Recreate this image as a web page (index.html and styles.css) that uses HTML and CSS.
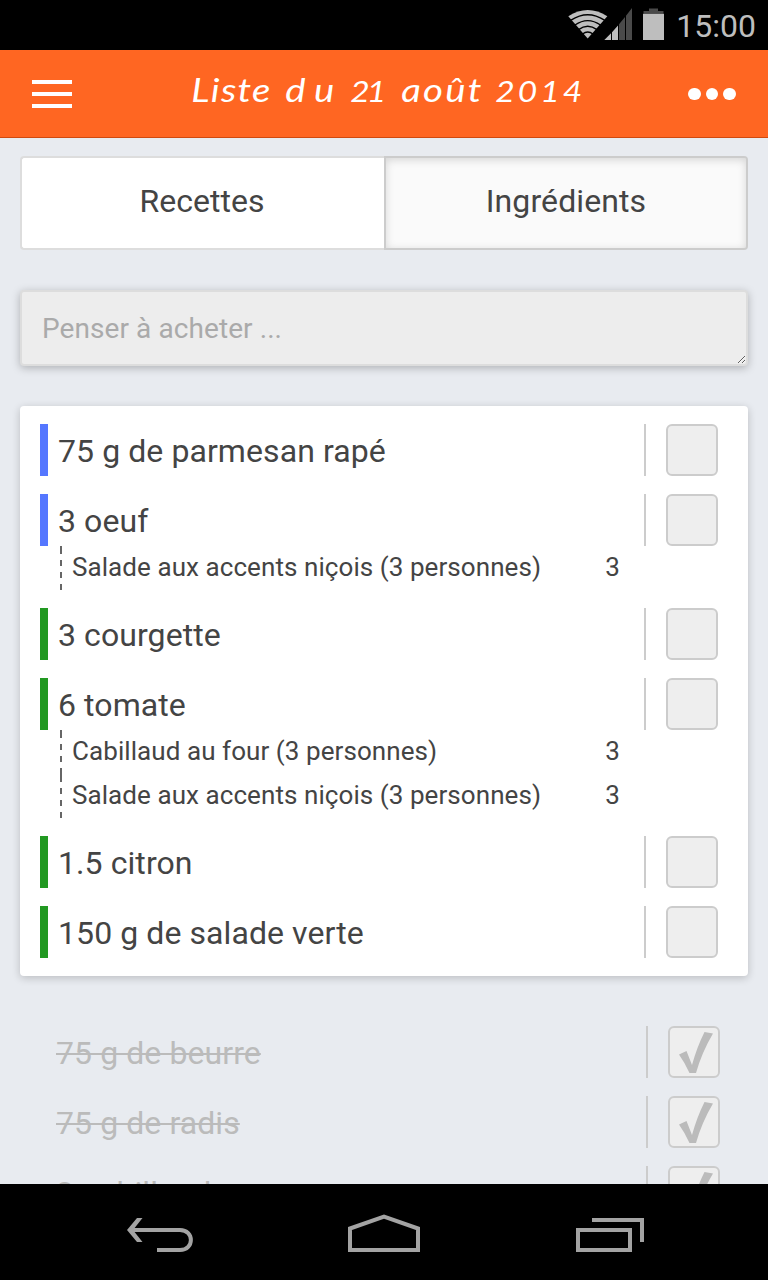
FILE: index.html
```html
<!DOCTYPE html>
<html lang="fr">
<head>
<meta charset="utf-8">
<title>Liste du 21 août 2014</title>
<link rel="stylesheet" href="styles.css">
</head>
<body>
<div class="status">
  <svg class="status-icons" width="100" height="34" viewBox="566 6 100 34">
    <path d="M587.700 38.500 L568.300 16.300 Q587.700 3.500 607.300 16.300Z" fill="#bebebe"/>
    <g fill="none" stroke="#000" stroke-width="1.400">
      <path d="M571 20.200 Q587.700 9.200 604.500 20.200"/>
      <path d="M575 25 Q587.700 16.200 600.500 25"/>
      <path d="M578.500 29.600 Q587.700 22.800 597 29.600"/>
      <path d="M582.500 34 Q587.700 30 593 34"/>
    </g>
    <path d="M604.300 40 L611 33.300 V40Z M612 32.300 L618 25.500 V40 H612Z" fill="#bebebe"/>
    <path d="M619 24.300 L625 17 V40 H619Z M626 15.800 L632 8 V40 H626Z" fill="#4a4a4a"/>
    <path d="M643.500 13.800 V11 H649 V8.500 H658 V11 H663.500 V13.800Z" fill="#4a4a4a"/>
    <path d="M643 13.800 H664 V40 H643Z" fill="#bebebe"/>
  </svg>
  <span class="clock">15:00</span>
</div>
<header class="header">
  <div class="menu"><i></i><i></i><i></i></div>
  <h1 class="title"><span class="w1">Liste</span><span class="w2">du</span><span class="w3">21</span><span class="w4">août</span><span class="w5">2014</span></h1>
  <div class="more"><i></i><i></i><i></i></div>
</header>
<main class="content">
  <div class="tabs">
    <div class="tab">Recettes</div>
    <div class="tab active">Ingrédients</div>
  </div>
  <textarea class="think" placeholder="Penser à acheter ..."></textarea>
  <section class="card">
    <div class="item">
      <div class="row blue"><span class="name">75 g de parmesan rapé</span><span class="check"><i class="box"></i></span></div>
    </div>
    <div class="item">
      <div class="row blue"><span class="name">3 oeuf</span><span class="check"><i class="box"></i></span></div>
      <div class="sub"><span>Salade aux accents niçois (3 personnes)</span><span>3</span></div>
    </div>
    <div class="item">
      <div class="row green"><span class="name">3 courgette</span><span class="check"><i class="box"></i></span></div>
    </div>
    <div class="item">
      <div class="row green"><span class="name">6 tomate</span><span class="check"><i class="box"></i></span></div>
      <div class="sub"><span>Cabillaud au four (3 personnes)</span><span>3</span></div>
      <div class="sub"><span>Salade aux accents niçois (3 personnes)</span><span>3</span></div>
    </div>
    <div class="item">
      <div class="row green"><span class="name">1.5 citron</span><span class="check"><i class="box"></i></span></div>
    </div>
    <div class="item">
      <div class="row green"><span class="name">150 g de salade verte</span><span class="check"><i class="box"></i></span></div>
    </div>
  </section>
  <section class="done">
    <div class="row"><span class="name">75 g de beurre</span><span class="check"><i class="box"><svg viewBox="0 0 48 48"><path d="M9 26.500 L16.500 23 L22 37 Q27 19 34.500 4 L43 5.500 Q32 24 26 45 H19.500 Q15 35 9 26.500Z"/></svg></i></span></div>
    <div class="row"><span class="name">75 g de radis</span><span class="check"><i class="box"><svg viewBox="0 0 48 48"><path d="M9 26.500 L16.500 23 L22 37 Q27 19 34.500 4 L43 5.500 Q32 24 26 45 H19.500 Q15 35 9 26.500Z"/></svg></i></span></div>
    <div class="row"><span class="name">3 cabillaud</span><span class="check"><i class="box"><svg viewBox="0 0 48 48"><path d="M9 26.500 L16.500 23 L22 37 Q27 19 34.500 4 L43 5.500 Q32 24 26 45 H19.500 Q15 35 9 26.500Z"/></svg></i></span></div>
  </section>
</main>
<nav class="nav">
  <svg viewBox="0 0 768 96" width="768" height="96" fill="none" stroke="#a3a3a3" stroke-width="4">
    <path d="M130 46 H180 C194.500 46 194.500 66 180 66 H157"/>
    <path d="M137 34 H142.500 L133 46 L142.500 58 H137 L127 46Z" fill="#a3a3a3" stroke="none"/>
    <path d="M350 66 V44.500 L384 32.500 L418 44.500 V66Z"/>
    <path d="M578 46 H630 V66 H578Z M592 36 H642 V58"/>
  </svg>
</nav>
</body>
</html>
```
FILE: styles.css
```css
* { box-sizing: border-box; }
body {
  margin: 0;
  display: flex;
  flex-direction: column;
  height: 1280px;
  overflow: hidden;
  background: #e8ebf0;
  color: #444;
  font-family: Roboto, "Liberation Sans", sans-serif;
  font-size: 32px;
}
.status {
  flex: none;
  display: flex;
  justify-content: flex-end;
  align-items: flex-start;
  gap: 10px;
  height: 50px;
  padding: 6px 12px 0 0;
  background: #000;
  color: #bebebe;
}
.clock { font-size: 32px; line-height: 40px; }
.header {
  flex: none;
  display: flex;
  justify-content: space-between;
  align-items: center;
  height: 88px;
  padding: 0 32px;
  background: #ff6622;
  border-bottom: 1px solid #cf4a10;
}
.menu { display: flex; flex-direction: column; gap: 8px; width: 40px; padding-top: 1px; }
.menu i { height: 4px; background: #fff; }
.more { display: flex; gap: 5px; padding-top: 1px; }
.more i { width: 12.600px; height: 12.600px; border-radius: 50%; background: #fff; }
.title {
  display: flex;
  align-items: baseline;
  margin: 0 0 0 14px;
  width: 327px;
  height: 50px;
  color: #fff;
  font: italic 400 32px/42px Lato, sans-serif;
  white-space: nowrap;
  transform: scaleX(1.2);
}
.w1 { width: 78.300px; letter-spacing: 1.100px; }
.w2 { width: 54.200px; letter-spacing: 7px; }
.w3 { width: 42.500px; font-size: 28px; letter-spacing: -2.500px; }
.w4 { width: 78.300px; letter-spacing: 1.800px; }
.w5 { width: 73.700px; font-size: 28px; letter-spacing: 2.500px; }
.content { flex: 1; min-height: 0; overflow: hidden; padding: 18px 20px 0; }
.tabs { display: grid; grid-template-columns: 1fr 1fr; height: 94px; }
.tab {
  border: 2px solid #ddd;
  border-right: 0;
  border-radius: 4px 0 0 4px;
  background: #fff;
  line-height: 86px;
  text-align: center;
}
.tab.active {
  border: 2px solid #ccc;
  border-radius: 0 4px 4px 0;
  background: #fafafa;
  box-shadow: inset 0 2px 8px rgba(0, 0, 0, .15);
  letter-spacing: .1px;
}
.tab:first-child { padding-right: 2px; }
.think {
  display: block;
  width: 728px;
  height: 76px;
  margin: 40px 0;
  padding: 17px 20px 15px;
  border: 2px solid #ddd;
  border-radius: 4px;
  background: #ededed;
  box-shadow: 0 2px 8px rgba(0, 0, 0, .25);
  font: 28px/40px Roboto, sans-serif;
  letter-spacing: .08px;
  overflow: hidden;
}
.think::placeholder { color: #aaa; }
.card {
  display: flex;
  flex-direction: column;
  gap: 18px;
  padding: 18px 30px 18px 20px;
  border-radius: 4px;
  background: #fff;
  box-shadow: 0 2px 8px rgba(0, 0, 0, .2);
}
.row { display: flex; justify-content: space-between; height: 52px; }
.name { padding-left: 10px; line-height: 54px; letter-spacing: .08px; white-space: nowrap; }
.blue { border-left: 8px solid #5577ff; }
.green { border-left: 8px solid #229922; }
.check { width: 74px; padding-left: 20px; border-left: 2px solid #ccc; }
.box {
  display: block;
  width: 52px;
  height: 52px;
  border: 2px solid #ccc;
  border-radius: 6px;
  background: #eee;
}
.box svg { display: block; width: 48px; height: 48px; fill: #bbb; }
.sub {
  display: flex;
  justify-content: space-between;
  height: 44px;
  margin: 0 98px 0 20px;
  padding-left: 12px;
  background: repeating-linear-gradient(#666 0 6px, transparent 6px 12px) 0 2px / 2px 42px no-repeat,
    linear-gradient(#666, #666) 0 0 / 2px 2px no-repeat;
  font-size: 26px;
  line-height: 42px;
  letter-spacing: .07px;
}
.done { display: flex; flex-direction: column; gap: 18px; margin-top: 50px; padding: 0 28px 0 26px; color: #bbb; }
.done .name { padding-left: 0; margin-left: 10px; text-decoration: line-through; text-decoration-thickness: 2px; }
.nav { flex: none; height: 96px; background: #000; }
.nav svg { display: block; }
```
